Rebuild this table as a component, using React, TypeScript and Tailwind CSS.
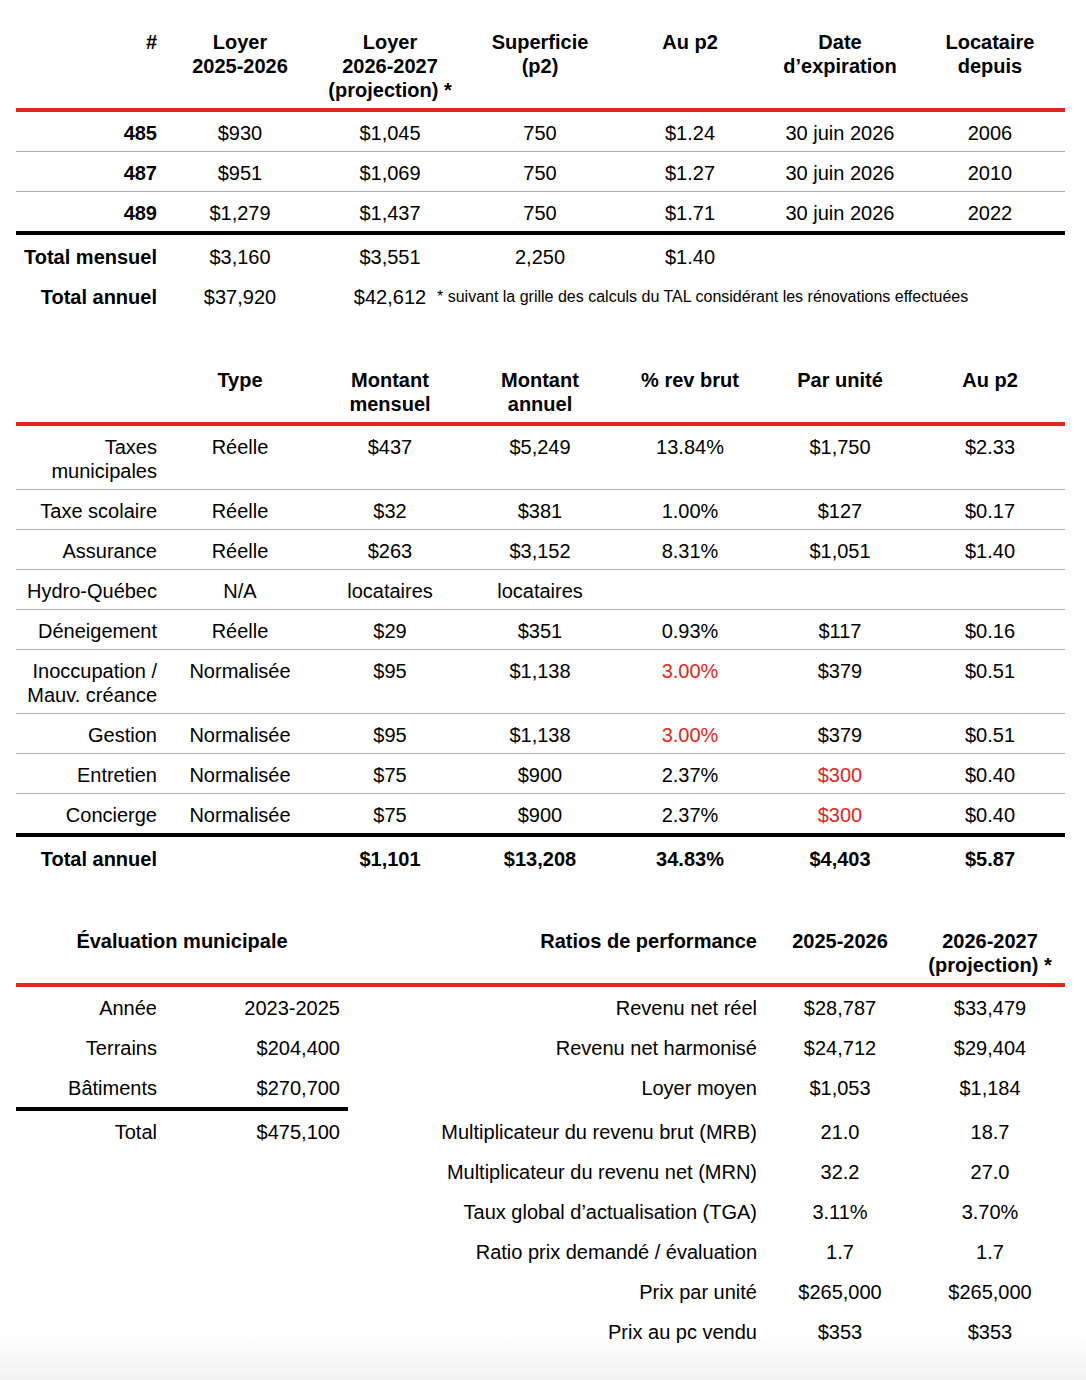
import React from "react";

const red = "text-[#e2261b]";

const head1 = ["#", "Loyer\n2025-2026", "Loyer\n2026-2027\n(projection) *", "Superficie\n(p2)", "Au p2", "Date\nd’expiration", "Locataire\ndepuis"];

const units = [
  ["485", "$930", "$1,045", "750", "$1.24", "30 juin 2026", "2006"],
  ["487", "$951", "$1,069", "750", "$1.27", "30 juin 2026", "2010"],
  ["489", "$1,279", "$1,437", "750", "$1.71", "30 juin 2026", "2022"],
];

const head2 = ["", "Type", "Montant\nmensuel", "Montant\nannuel", "% rev brut", "Par unité", "Au p2"];

// [label, type, mensuel, annuel, %, unité, p2, redCol]
const expenses: (string | number)[][] = [
  ["Taxes\nmunicipales", "Réelle", "$437", "$5,249", "13.84%", "$1,750", "$2.33", -1],
  ["Taxe scolaire", "Réelle", "$32", "$381", "1.00%", "$127", "$0.17", -1],
  ["Assurance", "Réelle", "$263", "$3,152", "8.31%", "$1,051", "$1.40", -1],
  ["Hydro-Québec", "N/A", "locataires", "locataires", "", "", "", -1],
  ["Déneigement", "Réelle", "$29", "$351", "0.93%", "$117", "$0.16", -1],
  ["Inoccupation /\nMauv. créance", "Normalisée", "$95", "$1,138", "3.00%", "$379", "$0.51", 4],
  ["Gestion", "Normalisée", "$95", "$1,138", "3.00%", "$379", "$0.51", 4],
  ["Entretien", "Normalisée", "$75", "$900", "2.37%", "$300", "$0.40", 5],
  ["Concierge", "Normalisée", "$75", "$900", "2.37%", "$300", "$0.40", 5],
];

const evals = [
  ["Année", "2023-2025"],
  ["Terrains", "$204,400"],
  ["Bâtiments", "$270,700"],
  ["Total", "$475,100"],
];

const ratios = [
  ["Revenu net réel", "$28,787", "$33,479"],
  ["Revenu net harmonisé", "$24,712", "$29,404"],
  ["Loyer moyen", "$1,053", "$1,184"],
  ["Multiplicateur du revenu brut (MRB)", "21.0", "18.7"],
  ["Multiplicateur du revenu net (MRN)", "32.2", "27.0"],
  ["Taux global d’actualisation (TGA)", "3.11%", "3.70%"],
  ["Ratio prix demandé / évaluation", "1.7", "1.7"],
  ["Prix par unité", "$265,000", "$265,000"],
  ["Prix au pc vendu", "$353", "$353"],
];

const grid7 = "grid grid-cols-[149px_repeat(6,150px)]";
const grid5 = "grid grid-cols-[149px_183px_417px_150px_150px]";

function HeadRow({ cells }: { cells: string[] }) {
  return (
    <div className={`${grid7} pb-[6px] border-b-4 border-[#e2261b] font-bold`}>
      {cells.map((c, i) => (
        <div key={i} className={`whitespace-pre-line ${i == 0 ? "text-right pr-2" : "text-center"}`}>{c}</div>
      ))}
    </div>
  );
}

function BodyRow({ cells, boldFirst, redCol = -1, last }: any) {
  return (
    <div className={`${grid7} pt-[9px] pb-[6px] ${last ? "" : "border-b border-[#b3b3b3]"}`}>
      {cells.map((c: string, i: number) => (
        <div
          key={i}
          className={`whitespace-pre-line ${i == 0 ? "text-right pr-2" : "text-center"} ${i == 0 && boldFirst ? "font-bold" : ""} ${i == redCol ? red : ""}`}
        >
          {c}
        </div>
      ))}
    </div>
  );
}

export default function App() {
  return (
    <div className="h-[1380px] w-[1086px] px-4 pt-[30px] text-black text-[20px] leading-[24px] font-['Liberation_Sans',Arial,sans-serif] bg-[linear-gradient(to_bottom,#ffffff_1335px,#f2f2f2_1380px)]">
      {/* loyers */}
      <div className="w-[1049px]">
        <HeadRow cells={head1} />
        {units.map((u, i) => (
          <BodyRow key={u[0]} cells={u} boldFirst last={i == units.length - 1} />
        ))}
        <div className="border-t-4 border-black">
          <div className={`${grid7} pt-[10px] pb-[6px]`}>
            <div className="text-right pr-2 font-bold">Total mensuel</div>
            <div className="text-center">$3,160</div>
            <div className="text-center">$3,551</div>
            <div className="text-center">2,250</div>
            <div className="text-center">$1.40</div>
          </div>
          <div className={`${grid7} pt-[10px] pb-[6px]`}>
            <div className="text-right pr-2 font-bold">Total annuel</div>
            <div className="text-center">$37,920</div>
            <div className="text-center">$42,612</div>
            <div className="col-span-4 -ml-[28px] text-[16px] whitespace-nowrap">
              * suivant la grille des calculs du TAL considérant les rénovations effectuées
            </div>
          </div>
        </div>
      </div>

      {/* dépenses */}
      <div className="w-[1049px] mt-[53px]">
        <HeadRow cells={head2} />
        {expenses.map((e, i) => (
          <BodyRow
            key={i}
            cells={e.slice(0, 7) as string[]}
            redCol={e[7] as number}
            last={i == expenses.length - 1}
          />
        ))}
        <div className={`${grid7} border-t-4 border-black pt-[10px] pb-[6px] font-bold`}>
          <div className="text-right pr-2">Total annuel</div>
          <div />
          <div className="text-center">$1,101</div>
          <div className="text-center">$13,208</div>
          <div className="text-center">34.83%</div>
          <div className="text-center">$4,403</div>
          <div className="text-center">$5.87</div>
        </div>
      </div>

      {/* évaluation + ratios */}
      <div className="w-[1049px] mt-[52px]">
        <div className={`${grid5} pb-[6px] border-b-4 border-[#e2261b] font-bold`}>
          <div className="col-span-2 text-center">Évaluation municipale</div>
          <div className="text-right pr-2">Ratios de performance</div>
          <div className="text-center">2025-2026</div>
          <div className="text-center">2026-2027<br />(projection) *</div>
        </div>
        {ratios.map((r, i) => {
          const ev = evals[i];
          const isTotal = i == 3;
          return (
            <div key={i} className={`${grid5}`}>
              <div className={`text-right pr-2 pt-[9px] pb-[7px] ${isTotal ? "border-t-4 border-black" : ""}`}>{ev ? ev[0] : ""}</div>
              <div className={`text-right pr-2 pt-[9px] pb-[7px] ${isTotal ? "border-t-4 border-black" : ""}`}>{ev ? ev[1] : ""}</div>
              <div className={`text-right pr-2 pt-[9px] pb-[7px] ${isTotal ? "border-t-4 border-transparent" : ""}`}>{r[0]}</div>
              <div className={`text-center pt-[9px] pb-[7px] ${isTotal ? "border-t-4 border-transparent" : ""}`}>{r[1]}</div>
              <div className={`text-center pt-[9px] pb-[7px] ${isTotal ? "border-t-4 border-transparent" : ""}`}>{r[2]}</div>
            </div>
          );
        })}
      </div>
    </div>
  );
}
